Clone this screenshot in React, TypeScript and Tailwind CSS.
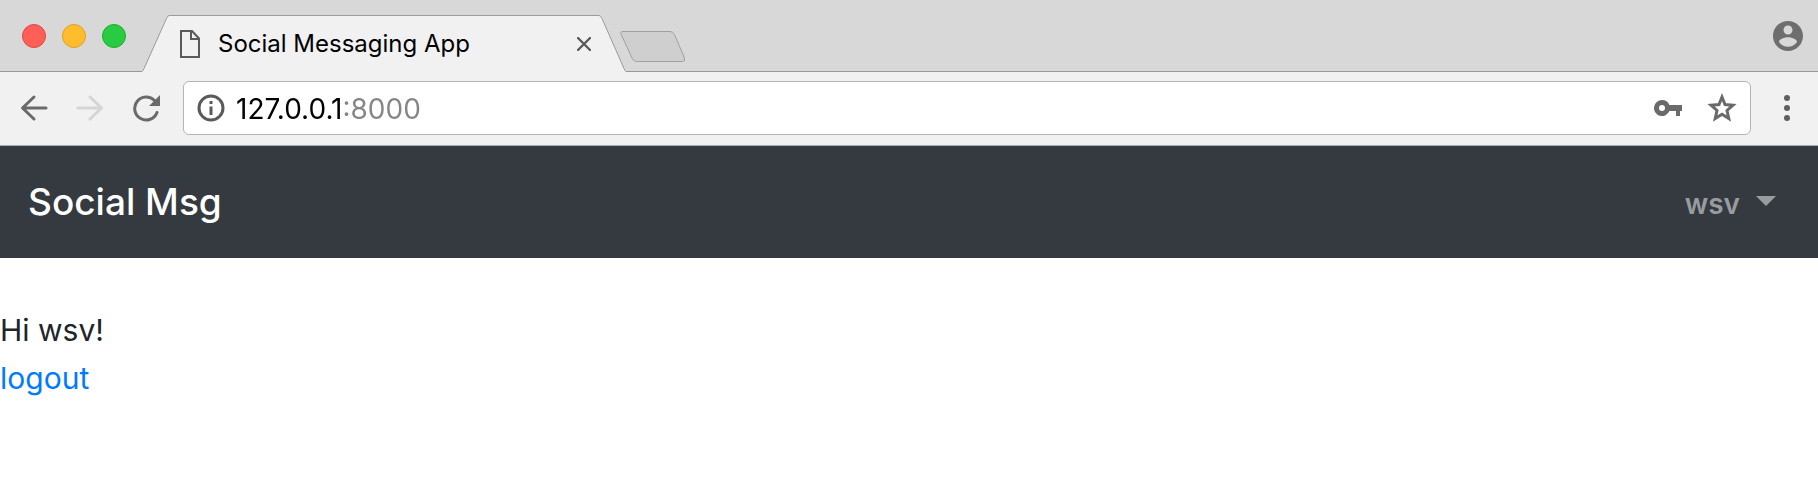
import React from "react";

function TrafficLights() {
  return (
    <div className="flex gap-4 pt-6 pl-[22px]">
      <button aria-label="Close window" className="size-6 rounded-full border border-[#e2463f] bg-[#ff5f57]" />
      <button aria-label="Minimize window" className="size-6 rounded-full border border-[#dfa023] bg-[#ffbd2e]" />
      <button aria-label="Zoom window" className="size-6 rounded-full border border-[#1dad2b] bg-[#28cb41]" />
    </div>
  );
}

function Tab() {
  return (
    <div className="flex h-[57px] self-end">
      <svg width="27" height="57" viewBox="0 0 27 57" aria-hidden="true">
        <path d="M0 57V56.5Q1 56 2 53.5L24.5 3.5Q26 .5 27 .5V57Z" fill="#f1f1f1" />
        <path d="M0 56.5Q1 56 2 53.5L24.5 3.5Q26 .5 27 .5" fill="none" stroke="#9b9b9b" />
      </svg>
      <div className="flex w-[430px] items-start border-t border-[#9b9b9b] bg-[#f1f1f1] pl-[11px]">
        <svg className="mt-3.5" width="20" height="28" viewBox="0 0 20 28" fill="none" stroke="#5a5a5a" strokeWidth="2" aria-hidden="true">
          <path d="M1 1H12L19 8.5V27H1Z" />
          <path d="M11 1V9H19" />
        </svg>
        <span className="mt-2.5 ml-[18px] flex-1 text-[24px] leading-9 text-black">Social Messaging App</span>
        <button aria-label="Close tab" className="mt-[21px] mr-2">
          <svg width="14" height="14" viewBox="0 0 14 14" stroke="#5a5a5a" strokeWidth="2.4" strokeLinecap="round">
            <path d="M1 1L13 13M13 1L1 13" />
          </svg>
        </button>
      </div>
      <svg width="27" height="57" viewBox="0 0 27 57" aria-hidden="true">
        <path d="M0 57V.5Q1.500 .5 3 3.500L25 53.500Q26 56 27 56.500V57Z" fill="#f1f1f1" />
        <path d="M0 .5Q1.500 .5 3 3.500L25 53.500Q26 56 27 56.500" fill="none" stroke="#9b9b9b" />
      </svg>
    </div>
  );
}

function TabStrip() {
  return (
    <header className="flex h-[72px] bg-[#d8d8d8] bg-[linear-gradient(#999,#999)] bg-[length:100%_1px] bg-bottom bg-no-repeat">
      <TrafficLights />
      <div className="ml-4 flex flex-1">
        <Tab />
        <button aria-label="New tab" className="mt-[30px] -ml-1.5 self-start">
          <svg width="66" height="33" viewBox="0 0 66 33">
            <path
              d="M3 1.500H50Q53 1.500 54.500 4.500L64.500 28Q65.500 31.500 62.500 31.500H17Q14 31.500 12.500 29L1.200 4.500Q0 1.500 3 1.500Z"
              fill="#cfcfcf"
              stroke="#a0a0a0"
            />
          </svg>
        </button>
      </div>
      <button aria-label="Profile" className="mt-[18px] mr-3 self-start">
        <svg width="36" height="36" viewBox="0 0 24 24" fill="#6e6e6e">
          <path d="M12 2C6.480 2 2 6.480 2 12s4.480 10 10 10 10-4.480 10-10S17.520 2 12 2zm0 3c1.660 0 3 1.340 3 3s-1.340 3-3 3-3-1.340-3-3 1.340-3 3-3zm0 14.200c-2.500 0-4.710-1.280-6-3.220.030-1.990 4-3.080 6-3.080 1.990 0 5.970 1.090 6 3.080-1.290 1.940-3.500 3.220-6 3.220z" />
        </svg>
      </button>
    </header>
  );
}

function Toolbar() {
  return (
    <div className="flex h-[74px] items-center border-b border-[#a9adad] bg-[#f1f1f1] pb-0.5 pl-5">
      <button aria-label="Back">
        <svg width="28" height="28" viewBox="0 0 28 28" fill="none" stroke="#6a6a6a" strokeWidth="3" strokeLinecap="round" strokeLinejoin="round">
          <path d="M14 3L2.500 14L14 25M3 14H26" />
        </svg>
      </button>
      <button aria-label="Forward" className="ml-7" disabled>
        <svg width="28" height="28" viewBox="0 0 28 28" fill="none" stroke="#d5d5d5" strokeWidth="3" strokeLinecap="round" strokeLinejoin="round">
          <path d="M14 3L25.500 14L14 25M25 14H2" />
        </svg>
      </button>
      <button aria-label="Reload" className="ml-7">
        <svg width="30" height="28" viewBox="0 0 30 28" fill="none" stroke="#6a6a6a" strokeWidth="3" strokeLinecap="round">
          <path d="M22.500 6.500A11.500 11.500 0 1 0 25 18.500" />
          <path d="M28 1V12H17Z" fill="#6a6a6a" stroke="none" />
        </svg>
      </button>
      <form className="ml-[21px] flex h-[54px] flex-1 items-center rounded-md border border-[#b4b4b4] bg-white pr-3 pl-3">
        <svg width="30" height="30" viewBox="0 0 30 30" fill="none" stroke="#5a5a5a" strokeWidth="3" aria-hidden="true">
          <circle cx="15" cy="15" r="12" />
          <path d="M15 13.500V22M15 8V11" />
        </svg>
        <input
          aria-label="Address"
          defaultValue="127.0.0.1:8000"
          spellCheck={false}
          className="ml-2.5 h-10 min-w-0 flex-1 bg-[linear-gradient(to_right,#000_108px,#858585_108px)] bg-clip-text pt-0.5 text-[28px] text-transparent caret-black outline-none"
        />
        <button type="button" aria-label="Saved passwords">
          <svg width="28" height="18" viewBox="0 0 28 18" fill="#6a6a6a">
            <path fillRule="evenodd" d="M8 1a8 8 0 1 0 7.400 11H22v5h4v-5h2V6H15.400A8 8 0 0 0 8 1zm0 5a3 3 0 1 1 0 6 3 3 0 0 1 0-6z" />
          </svg>
        </button>
        <button type="button" aria-label="Bookmark this page" className="ml-6">
          <svg width="32" height="32" viewBox="0 0 32 32" fill="none" stroke="#6a6a6a" strokeWidth="3">
            <path d="M16 5L19 12.500L27 13.200L21 18.500L22.800 26.500L16 22.300L9.200 26.500L11 18.500L5 13.200L13 12.500Z" />
          </svg>
        </button>
      </form>
      <button aria-label="Browser menu" className="mr-7 ml-[33px]">
        <svg width="6" height="28" viewBox="0 0 6 28" fill="#5f5f5f">
          <circle cx="3" cy="4" r="3" />
          <circle cx="3" cy="14" r="3" />
          <circle cx="3" cy="24" r="3" />
        </svg>
      </button>
    </div>
  );
}

export default function App() {
  return (
    <div className="min-h-screen bg-white font-['Inter',sans-serif]">
      <TabStrip />
      <Toolbar />
      <nav className="flex h-28 items-center justify-between bg-[#343a40] pr-[42px] pl-7">
        <a href="#" className="text-[37px] font-medium text-white">
          Social Msg
        </a>
        <button className="flex items-center gap-4 pt-1 text-[28px] font-semibold text-[#999c9f]">
          wsv
          <svg className="mb-1.5" width="20" height="10" viewBox="0 0 20 10" fill="currentColor" aria-hidden="true">
            <path d="M0 0H20L10 10Z" />
          </svg>
        </button>
      </nav>
      <main className="pt-12 text-[30px] leading-12 text-[#212529]">
        <p>Hi wsv!</p>
        <a href="#" className="text-[#007bff]">
          logout
        </a>
      </main>
    </div>
  );
}
